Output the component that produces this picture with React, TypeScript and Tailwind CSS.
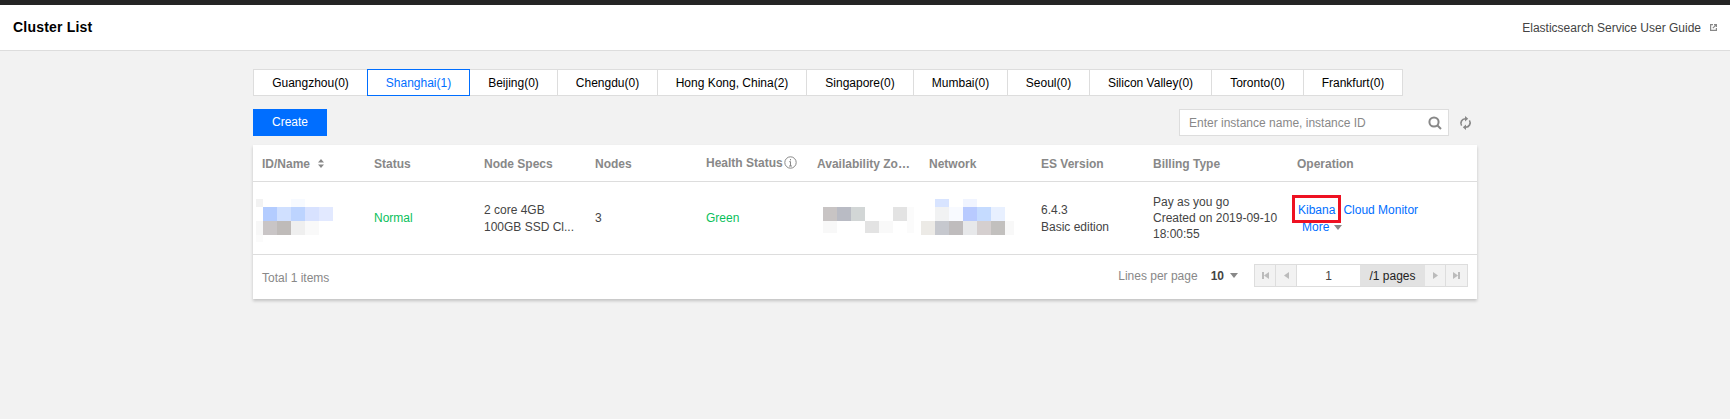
const regions = [
  { name: "Guangzhou(0)", width: "w-[115px]" },
  { name: "Shanghai(1)", width: "w-[103px]" },
  { name: "Beijing(0)", width: "w-[89px]" },
  { name: "Chengdu(0)", width: "w-[101px]" },
  { name: "Hong Kong, China(2)", width: "w-[150px]" },
  { name: "Singapore(0)", width: "w-[108px]" },
  { name: "Mumbai(0)", width: "w-[95px]" },
  { name: "Seoul(0)", width: "w-[83px]" },
  { name: "Silicon Valley(0)", width: "w-[123px]" },
  { name: "Toronto(0)", width: "w-[93px]" },
  { name: "Frankfurt(0)", width: "w-[100px]" },
];

const W = "#ffffff";

// blurred-out values from the screenshot: each row is [width, colour] cells
const idBlur: [number, string][][] = [
  [[7, "#f2f2f2"], [28, W], [14, "#f7faff"]],
  [[7, W], [14, "#b3ccff"], [14, "#d0e0ff"], [14, "#bdd4ff"], [14, "#d8e2ff"], [14, "#e2e9ff"]],
  [[7, "#f7f7f7"], [14, "#c9c5c6"], [14, "#bfbbb9"], [14, "#efefef"], [14, "#f9f9f9"]],
  [[7, "#fbfbfb"]],
];
const idHeights = ["h-[8px]", "h-[14px]", "h-[14px]", "h-[7px]"];

const zoneBlur: [number, string][][] = [
  [[14, "#c8c4c4"], [14, "#b9bbc4"], [14, "#d2d6d6"], [28, W], [14, "#e3e3e3"], [7, "#fbfbfb"]],
  [[14, "#f8f8f8"], [28, W], [14, "#e3e3e3"], [14, "#f9f9f9"], [14, W], [7, "#fbfbfb"]],
];
const zoneHeights = ["h-[14px]", "h-[12px]"];

const netBlur: [number, string][][] = [
  [[14, W], [14, "#d8e4ff"], [14, W], [14, "#f0f4ff"]],
  [[14, W], [14, "#f1f2f3"], [14, "#f8faff"], [14, "#b8caff"], [14, "#c5dbff"], [14, "#e8f0ff"]],
  [[14, "#eceae6"], [14, "#c6c8ce"], [14, "#bfbcbd"], [14, "#e7e8ea"], [14, "#d5cfcf"], [14, "#c2c0be"], [9, "#f8f8f8"]],
];
const netHeights = ["h-[8px]", "h-[14px]", "h-[14px]"];

function Blur({ rows, heights, className }: { rows: [number, string][][]; heights: string[]; className: string }) {
  return (
    <div className={className}>
      {rows.map((row, i) => (
        <div key={i} className={`flex ${heights[i]}`}>
          {row.map(([w, c], j) => (
            <div key={j} style={{ width: w, backgroundColor: c }} />
          ))}
        </div>
      ))}
    </div>
  );
}

function Caret({ className }: { className: string }) {
  return (
    <svg width="8" height="5" viewBox="0 0 8 5" className={className}>
      <path d="M0 0h8L4 5z" fill="#888888" />
    </svg>
  );
}

function PageButton({ d, bar }: { d: string; bar?: number }) {
  return (
    <div className="flex h-full w-[21px] items-center justify-center border-r border-[#dddddd] bg-[#f2f2f2] last:border-r-0">
      <svg width="9" height="9" viewBox="0 0 9 9">
        <path d={d} fill="#bbbbbb" />
        {bar !== undefined && <rect x={bar} y="1" width="2" height="7" fill="#bbbbbb" />}
      </svg>
    </div>
  );
}

const headCell = "truncate pl-[9px] pr-2 text-[12px] font-bold text-[#888888]";
const cell = "pl-[9px] text-[12px] text-[#444444]";

export default function App() {
  return (
    <div className="min-h-screen bg-[#f2f2f2] font-['Liberation_Sans',Arial,sans-serif]">
      <div className="h-[5px] bg-[#242424]" />
      <header className="flex h-[46px] items-center justify-between border-b border-[#dddddd] bg-white pl-[13px] pr-[13px]">
        <h1 className="text-[14px] font-bold tracking-[0.2px] text-black">Cluster List</h1>
        <a className="flex items-center gap-[9px] text-[12px] text-[#444444]">
          Elasticsearch Service User Guide
          <svg width="7" height="7" viewBox="0 0 7 7" fill="none" stroke="#888888" strokeWidth="1.2">
            <path d="M3 .6H.6v5.800h5.800V4" />
            <path d="M2.800 4.200 6.400.6M4 .6h2.400V3" />
          </svg>
        </a>
      </header>

      <main className="ml-[253px] w-[1224px] pt-[18px]">
        <div className="flex">
          {regions.map((r, i) =>
            r.name === "Shanghai(1)" ? (
              <div
                key={r.name}
                className={`relative z-10 -ml-px flex h-[27px] items-center justify-center border border-[#006eff] bg-white text-[12px] text-[#006eff] ${r.width}`}
              >
                {r.name}
              </div>
            ) : (
              <div
                key={r.name}
                className={`flex h-[27px] items-center justify-center border border-[#dddddd] bg-white text-[12px] text-black ${r.width} ${
                  i === 0 ? "" : "-ml-px"
                }`}
              >
                {r.name}
              </div>
            )
          )}
        </div>

        <div className="mt-[13px] flex items-center justify-between">
          <button className="h-[27px] w-[74px] bg-[#006eff] pb-px text-[12px] text-white">Create</button>
          <div className="flex items-center">
            <div className="flex h-[27px] w-[270px] items-center justify-between border border-[#dddddd] bg-white pl-[9px] pr-[6px]">
              <span className="text-[12px] text-[#888888]">Enter instance name, instance ID</span>
              <svg width="14" height="14" viewBox="0 0 14 14" fill="none" stroke="#888888" strokeWidth="2">
                <circle cx="6" cy="6" r="4.6" />
                <path d="m9.5 9.5 3.5 3.5" />
              </svg>
            </div>
            <svg width="13" height="14" viewBox="0 0 13 14" fill="none" className="ml-[10px] mr-[5px]">
              <path d="M2.6 9.6A4.4 4.4 0 0 1 6.5 2.8" stroke="#888888" strokeWidth="1.6" />
              <path d="M10.4 4.4A4.4 4.4 0 0 1 6.5 11.2" stroke="#888888" strokeWidth="1.6" />
              <path d="M6 0v5.4L9.2 2.8zM7 14V8.600L3.800 11.200z" fill="#888888" />
            </svg>
          </div>
        </div>

        <section className="mt-[9px] h-[154px] bg-white shadow-[0_2px_3px_rgba(0,0,0,0.2)]">
          <div className="grid h-[37px] grid-cols-[112px_110px_111px_111px_111px_112px_112px_112px_144px_1fr] items-center border-b border-[#dddddd] pt-px">
            <div className={`${headCell} flex items-center gap-[8px]`}>
              ID/Name
              <svg width="6" height="9" viewBox="0 0 6 9">
                <path d="M3 0 6 3.500H0zM3 9 0 5.500h6z" fill="#888888" />
              </svg>
            </div>
            <div className={headCell}>Status</div>
            <div className={headCell}>Node Specs</div>
            <div className={headCell}>Nodes</div>
            <div className={`${headCell} flex items-center !pr-0 pb-[2px]`}>
              Health Status
              <svg width="13" height="13" viewBox="0 0 13 13" fill="none" className="ml-px shrink-0">
                <circle cx="6.500" cy="6.500" r="5.700" stroke="#888888" />
                <path d="M6.500 3v1.400M6.500 5.500V10M5.200 5.700h1.300M5 10h3" stroke="#888888" />
              </svg>
            </div>
            <div className={`${headCell} !pr-[9px]`}>Availability Zone</div>
            <div className={headCell}>Network</div>
            <div className={headCell}>ES Version</div>
            <div className={headCell}>Billing Type</div>
            <div className={headCell}>Operation</div>
          </div>

          <div className="grid h-[73px] grid-cols-[112px_110px_111px_111px_111px_112px_112px_112px_144px_1fr] items-center border-b border-[#dddddd]">
            <Blur rows={idBlur} heights={idHeights} className="ml-[3px] self-start pt-[17px]" />
            <div className={`${cell} !text-[#0abf5b]`}>Normal</div>
            <div className={`${cell} pt-[2px] leading-[17px]`}>
              2 core 4GB
              <br />
              100GB SSD Cl...
            </div>
            <div className={cell}>3</div>
            <div className={`${cell} !text-[#0abf5b]`}>Green</div>
            <Blur rows={zoneBlur} heights={zoneHeights} className="ml-[15px] self-start pt-[25px]" />
            <Blur rows={netBlur} heights={netHeights} className="ml-px self-start pt-[17px]" />
            <div className={`${cell} pt-[2px] leading-[17px]`}>
              6.4.3
              <br />
              Basic edition
            </div>
            <div className={`${cell} leading-[16px]`}>
              Pay as you go
              <br />
              Created on 2019-09-10
              <br />
              18:00:55
            </div>
            <div className="pl-[10px] pt-[2px] text-[12px] leading-[17px] text-[#006eff]">
              <div className="relative w-fit">
                Kibana
                <span className="ml-[8px]">Cloud Monitor</span>
                {/* red annotation box drawn over the screenshot */}
                <div className="absolute -left-[6px] -top-[7px] h-[28px] w-[49px] border-[3px] border-[#ee1122]" />
              </div>
              <div className="flex items-center pl-[4px]">
                More
                <Caret className="ml-[5px]" />
              </div>
            </div>
          </div>

          <div className="flex h-[44px] items-center justify-between pl-[9px] pr-[9px]">
            <span className="pt-[2px] text-[12px] text-[#888888]">Total 1 items</span>
            <div className="-mt-[3px] flex items-center">
              <span className="text-[12px] text-[#888888]">Lines per page</span>
              <span className="ml-[13px] text-[12px] font-bold text-[#444444]">10</span>
              <Caret className="ml-[6px]" />
              <div className="ml-[16px] flex h-[23px] items-center border border-[#dddddd]">
                <PageButton d="M8 1v7L3 4.500z" bar={1} />
                <PageButton d="M7 1v7L2 4.500z" />
                <div className="flex h-full w-[63px] items-center justify-center bg-white text-[12px] text-[#444444]">1</div>
                <div className="flex h-full w-[65px] items-center justify-center bg-[#e2e2e2] text-[12px] text-[#222222]">/1 pages</div>
                <PageButton d="M2 1v7l5-3.500z" />
                <PageButton d="M1 1v7l5-3.500z" bar={6} />
              </div>
            </div>
          </div>
        </section>
      </main>
    </div>
  );
}
